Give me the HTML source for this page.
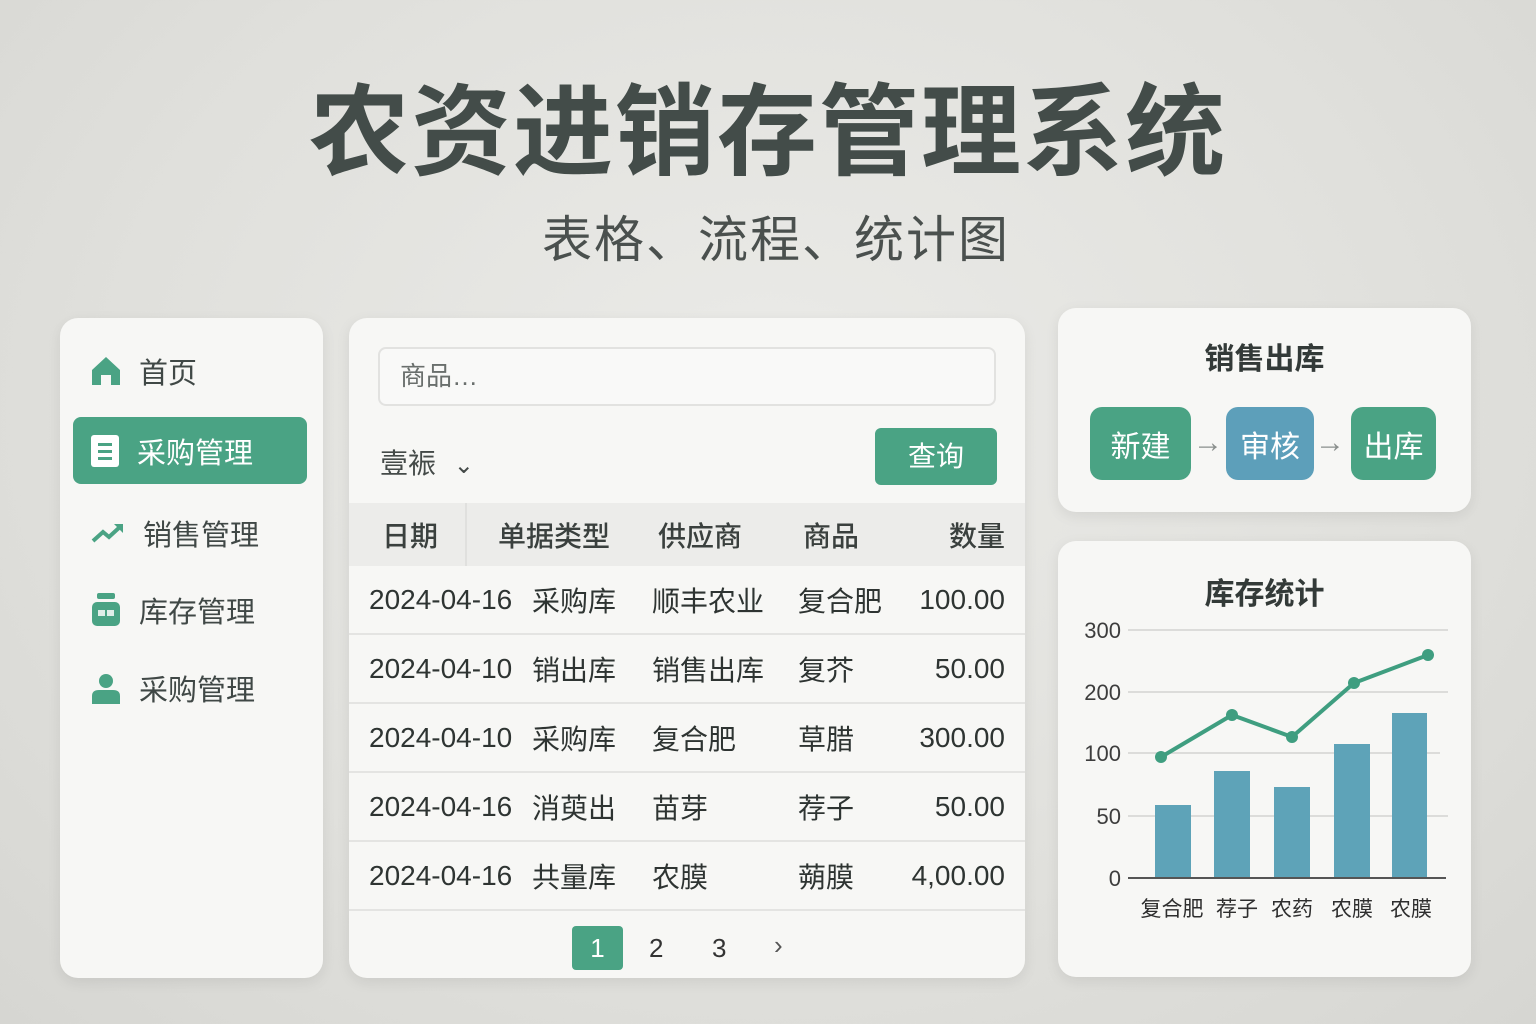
<!DOCTYPE html>
<html><head><meta charset="utf-8"><style>
*{margin:0;padding:0;box-sizing:border-box}
body{width:1536px;height:1024px;overflow:hidden;background:radial-gradient(ellipse at 50% 40%,#ebebe8 0%,#e0e0dc 60%,#d6d6d2 100%);font-family:"Liberation Sans","Noto Sans CJK SC",sans-serif;color:#3c4442;position:relative}
.abs{position:absolute}
.card{position:absolute;background:#f7f7f5;border-radius:18px;box-shadow:0 4px 14px rgba(0,0,0,.08)}
.title{left:0;width:1536px;top:68px;text-align:center;font-size:100px;font-weight:bold;color:#434c49;letter-spacing:2px;line-height:130px}
.sub{left:8px;width:1536px;top:208px;text-align:center;font-size:50px;color:#4a504e;letter-spacing:2px;line-height:64px}
.nav{position:absolute;left:13px;width:234px;height:67px;display:flex;align-items:center;font-size:29px;color:#404846}
.nav svg{margin-left:18px;margin-right:18px}
.row{position:absolute;left:0;width:676px;height:69px;border-bottom:2px solid #e4e4e2;font-size:28px;color:#2e3432}
.row span,.hd span{position:absolute;top:50%;transform:translateY(-50%);white-space:nowrap}
.hd{position:absolute;left:0;top:185px;width:676px;height:63px;background:#ececea;font-size:28px;font-weight:500;color:#3a403e}
.box{position:absolute;top:99px;height:73px;border-radius:12px;color:#fff;font-size:30px;display:flex;align-items:center;justify-content:center}
.arr{position:absolute;top:118px;font-size:30px;color:#8a8f8d;font-weight:bold}
</style></head><body>
<div class="abs title">农资进销存管理系统</div>
<div class="abs sub">表格、流程、统计图</div>

<div class="card" style="left:60px;top:318px;width:263px;height:660px">
 <div class="nav" style="top:19px"><svg width="30" height="32" viewBox="0 0 30 32"><path d="M15 2 L29 15 V30 H20 V20 H10 V30 H1 V15 Z" fill="#4aa384"/></svg>首页</div>
 <div class="nav" style="top:99px;background:#4aa384;color:#fff;border-radius:8px"><svg width="28" height="32" viewBox="0 0 28 32"><rect x="0" y="0" width="28" height="32" rx="3" fill="#fff"/><rect x="7" y="8" width="14" height="3" fill="#4aa384"/><rect x="7" y="15" width="14" height="3" fill="#4aa384"/><rect x="7" y="22" width="14" height="3" fill="#4aa384"/></svg>采购管理</div>
 <div class="nav" style="top:181px"><svg width="34" height="24" viewBox="0 0 34 24"><path d="M2 20 L12 11 L18 16 L30 5" stroke="#4aa384" stroke-width="4" fill="none"/><path d="M23 3 H32 V12 Z" fill="#4aa384"/></svg>销售管理</div>
 <div class="nav" style="top:258px"><svg width="30" height="34" viewBox="0 0 30 34"><rect x="6" y="0" width="18" height="6" rx="2" fill="#4aa384"/><rect x="1" y="9" width="28" height="24" rx="5" fill="#4aa384"/><rect x="7" y="17" width="7" height="6" fill="#dfeee8"/><rect x="16" y="17" width="7" height="6" fill="#dfeee8"/></svg>库存管理</div>
 <div class="nav" style="top:336px"><svg width="30" height="32" viewBox="0 0 30 32"><circle cx="15" cy="9" r="7" fill="#4aa384"/><path d="M1 32 V24 Q1 18 8 18 H22 Q29 18 29 24 V32 Z" fill="#4aa384"/></svg>采购管理</div>
</div>

<div class="card" style="left:349px;top:318px;width:676px;height:660px;overflow:hidden">
 <div class="abs" style="left:29px;top:29px;width:618px;height:59px;border:2px solid #e2e2e0;border-radius:8px;background:#f9f9f8;font-size:26px;color:#6a6f6d;padding-left:20px;line-height:55px">商品…</div>
 <div class="abs" style="left:31px;top:124px;font-size:28px;color:#444a48">壹裖 <span style="font-size:24px;margin-left:10px">⌄</span></div>
 <div class="abs" style="left:526px;top:110px;width:122px;height:57px;background:#4aa384;border-radius:6px;color:#fff;font-size:28px;text-align:center;line-height:57px">查询</div>
 <div class="hd"><span style="left:33px">日期</span><div class="abs" style="left:116px;top:0;width:2px;height:63px;background:#e0e0de"></div><span style="left:149px">单据类型</span><span style="left:309px">供应商</span><span style="left:454px">商品</span><span style="right:20px">数量</span></div>
 <div class="row" style="top:248px"><span style="left:20px">2024-04-16</span><span style="left:183px">采购库</span><span style="left:303px">顺丰农业</span><span style="left:449px">复合肥</span><span style="right:20px">100.00</span></div>
 <div class="row" style="top:317px"><span style="left:20px">2024-04-10</span><span style="left:183px">销出库</span><span style="left:303px">销售出库</span><span style="left:449px">复芥</span><span style="right:20px">50.00</span></div>
 <div class="row" style="top:386px"><span style="left:20px">2024-04-10</span><span style="left:183px">采购库</span><span style="left:303px">复合肥</span><span style="left:449px">草腊</span><span style="right:20px">300.00</span></div>
 <div class="row" style="top:455px"><span style="left:20px">2024-04-16</span><span style="left:183px">消萸出</span><span style="left:303px">苗芽</span><span style="left:449px">荐子</span><span style="right:20px">50.00</span></div>
 <div class="row" style="top:524px"><span style="left:20px">2024-04-16</span><span style="left:183px">共量库</span><span style="left:303px">农膜</span><span style="left:449px">蒴膜</span><span style="right:20px">4,00.00</span></div>
 <div class="abs" style="left:223px;top:608px;width:51px;height:44px;background:#4aa384;border-radius:4px;color:#fff;font-size:26px;text-align:center;line-height:44px">1</div>
 <div class="abs" style="left:300px;top:615px;font-size:26px;color:#333">2</div>
 <div class="abs" style="left:363px;top:615px;font-size:26px;color:#333">3</div>
 <div class="abs" style="left:425px;top:612px;font-size:26px;color:#555">›</div>
</div>

<div class="card" style="left:1058px;top:308px;width:413px;height:204px">
 <div class="abs" style="left:0;width:413px;top:26px;text-align:center;font-size:30px;font-weight:bold;color:#333a38">销售出库</div>
 <div class="box" style="left:32px;width:101px;background:#4aa384">新建</div>
 <div class="arr" style="left:135px">→</div>
 <div class="box" style="left:168px;width:88px;background:#5d9fba">审核</div>
 <div class="arr" style="left:257px">→</div>
 <div class="box" style="left:293px;width:85px;background:#4aa384">出库</div>
</div>

<div class="card" style="left:1058px;top:541px;width:413px;height:436px">
 <div class="abs" style="left:0;width:413px;top:28px;text-align:center;font-size:30px;font-weight:bold;color:#333a38">库存统计</div>
 <svg class="abs" style="left:0;top:0" width="413" height="436" viewBox="1058 541 413 436">
  <g stroke="#dcdcda" stroke-width="2"><line x1="1128" y1="630" x2="1448" y2="630"/><line x1="1128" y1="692" x2="1448" y2="692"/><line x1="1128" y1="753" x2="1440" y2="753"/><line x1="1128" y1="816" x2="1448" y2="816"/></g>
  <g font-family="Liberation Sans" font-size="22" fill="#3d3d3d" text-anchor="end"><text x="1121" y="638">300</text><text x="1121" y="700">200</text><text x="1121" y="761">100</text><text x="1121" y="824">50</text><text x="1121" y="886">0</text></g>
  <g fill="#5ea3b8"><rect x="1155" y="805" width="36" height="72"/><rect x="1214" y="771" width="36" height="106"/><rect x="1274" y="787" width="36" height="90"/><rect x="1334" y="744" width="36" height="133"/><rect x="1392" y="713" width="35" height="164"/></g>
  <line x1="1128" y1="878" x2="1446" y2="878" stroke="#555" stroke-width="2"/>
  <polyline points="1161,757 1232,715 1292,737 1354,683 1428,655" fill="none" stroke="#3f9e80" stroke-width="4"/>
  <g fill="#3f9e80"><circle cx="1161" cy="757" r="6"/><circle cx="1232" cy="715" r="6"/><circle cx="1292" cy="737" r="6"/><circle cx="1354" cy="683" r="6"/><circle cx="1428" cy="655" r="6"/></g>
  <g font-family="Liberation Sans, Noto Sans CJK SC" font-size="21" fill="#2e2e2e" text-anchor="middle"><text x="1172" y="916">复合肥</text><text x="1237" y="916">荐子</text><text x="1292" y="916">农药</text><text x="1352" y="916">农膜</text><text x="1411" y="916">农膜</text></g>
 </svg>
</div>
</body></html>
